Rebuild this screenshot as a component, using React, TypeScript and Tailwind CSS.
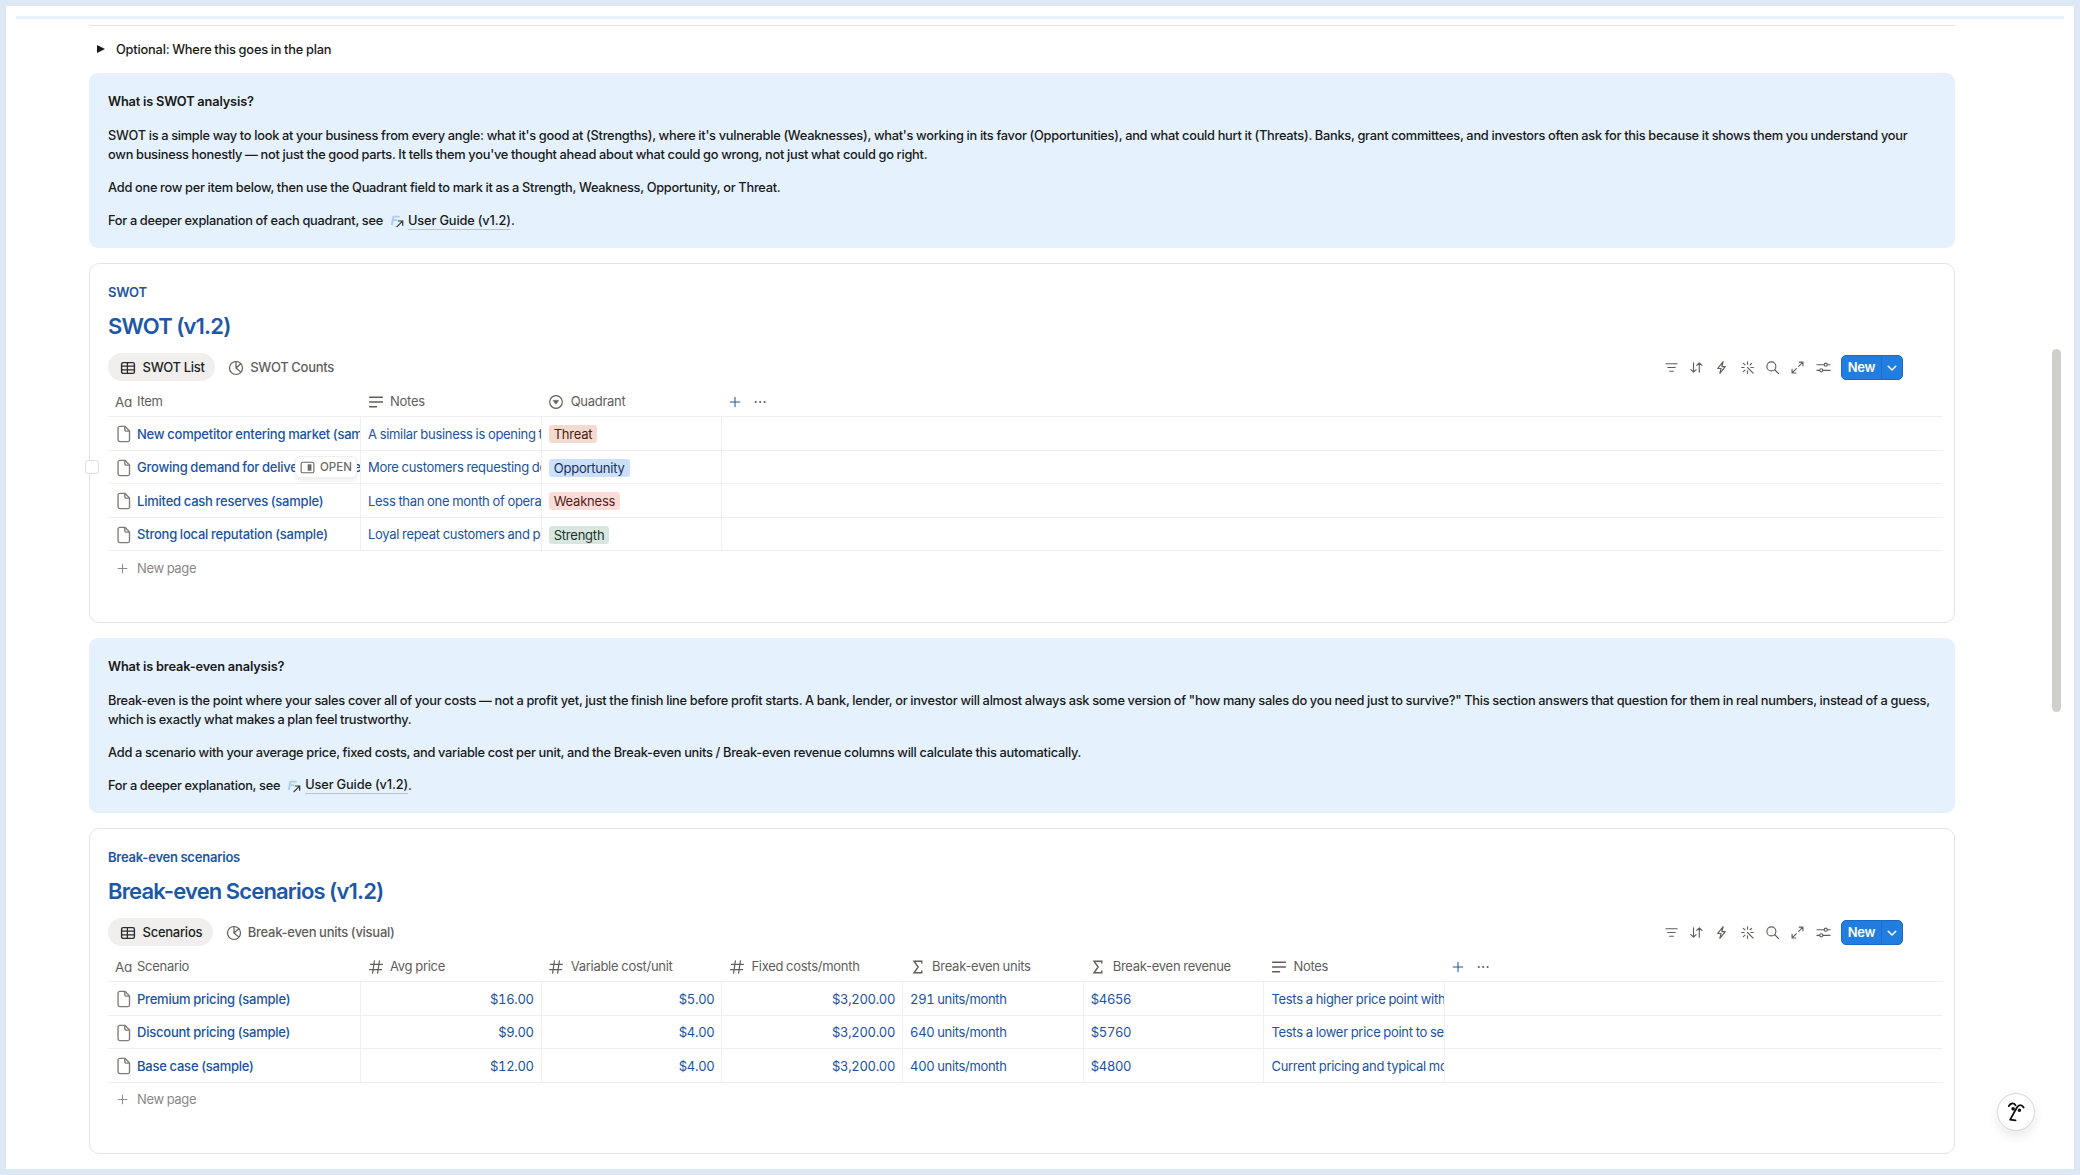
import type { ReactNode } from 'react';

type Column = {
  label: string;
  icon: 'title' | 'text' | 'select' | 'number' | 'formula';
  align?: 'right';
};

type Tag = { tag: string; className: string };
type Row = { name: string; cells: (string | Tag)[]; hovered?: boolean };

const swotColumns: Column[] = [
  { label: 'Item', icon: 'title' },
  { label: 'Notes', icon: 'text' },
  { label: 'Quadrant', icon: 'select' },
];

const swotRows: Row[] = [
  {
    name: 'New competitor entering market (sample)',
    cells: ['A similar business is opening two blocks away', { tag: 'Threat', className: 'bg-[#f5dbcf] text-[#4a2013]' }],
  },
  {
    name: 'Growing demand for delivery (sample)',
    cells: ['More customers requesting delivery options', { tag: 'Opportunity', className: 'bg-[#cce1f9] text-[#16305a]' }],
    hovered: true,
  },
  {
    name: 'Limited cash reserves (sample)',
    cells: ['Less than one month of operating expenses', { tag: 'Weakness', className: 'bg-[#fbdcd8] text-[#521c1a]' }],
  },
  {
    name: 'Strong local reputation (sample)',
    cells: ['Loyal repeat customers and positive reviews', { tag: 'Strength', className: 'bg-[#d9e6e0] text-[#1c3229]' }],
  },
];

const scenarioColumns: Column[] = [
  { label: 'Scenario', icon: 'title' },
  { label: 'Avg price', icon: 'number', align: 'right' },
  { label: 'Variable cost/unit', icon: 'number', align: 'right' },
  { label: 'Fixed costs/month', icon: 'number', align: 'right' },
  { label: 'Break-even units', icon: 'formula' },
  { label: 'Break-even revenue', icon: 'formula' },
  { label: 'Notes', icon: 'text' },
];

const scenarioRows: Row[] = [
  {
    name: 'Premium pricing (sample)',
    cells: ['$16.00', '$5.00', '$3,200.00', '291 units/month', '$4656', 'Tests a higher price point with fewer sales'],
  },
  {
    name: 'Discount pricing (sample)',
    cells: ['$9.00', '$4.00', '$3,200.00', '640 units/month', '$5760', 'Tests a lower price point to see volume'],
  },
  {
    name: 'Base case (sample)',
    cells: ['$12.00', '$4.00', '$3,200.00', '400 units/month', '$4800', 'Current pricing and typical monthly costs'],
  },
];

function Icon({ children, className = 'size-4' }: { children: ReactNode; className?: string }) {
  return (
    <svg
      viewBox="0 0 16 16"
      fill="none"
      stroke="currentColor"
      strokeWidth="1.2"
      strokeLinecap="round"
      strokeLinejoin="round"
      className={`shrink-0 ${className}`}
    >
      {children}
    </svg>
  );
}

const FileIcon = () => (
  <Icon className="h-[18px] w-[18px] text-[#7d7c78]">
    <path d="M4.3 1.2h4.5l4.1 4.1v7.9a1.6 1.6 0 0 1-1.6 1.6h-7a1.6 1.6 0 0 1-1.6-1.6V2.8a1.6 1.6 0 0 1 1.6-1.6z" />
    <path d="M8.7 1.4v2.8a1.2 1.2 0 0 0 1.2 1.2h2.8" />
  </Icon>
);

const PlusIcon = ({ className }: { className: string }) => (
  <Icon className={className}>
    <path d="M8 2.6v10.8M2.6 8h10.8" />
  </Icon>
);

const TableIcon = () => (
  <Icon className="size-4 text-[#2c2c2b]">
    <rect x="1.6" y="2.6" width="12.8" height="10.8" rx="1.6" strokeWidth="1.4" />
    <path d="M1.8 6.2h12.4M1.8 9.8h12.4M7.4 2.8v10.4" strokeWidth="1.3" />
  </Icon>
);

const PieIcon = () => (
  <Icon className="size-4 text-[#5f5e5b]">
    <circle cx="8" cy="8" r="6.5" />
    <path d="M8 1.6V8l4.8-4.3M8 8l4.3 3.6" />
  </Icon>
);

function ColumnIcon({ icon }: { icon: Column['icon'] }) {
  if (icon === 'title') {
    return <span className="w-[17px] text-[13.5px] tracking-[-0.2px] [font-feature-settings:'cv11']">Aa</span>;
  }
  if (icon === 'text') {
    return (
      <Icon>
        <path d="M1.6 3.2h12.8M1.6 8h12.8M1.6 12.8h7" strokeWidth="1.4" />
      </Icon>
    );
  }
  if (icon === 'select') {
    return (
      <Icon>
        <circle cx="8" cy="8" r="6.3" />
        <path d="M5.4 6.4h5.2L8 10z" fill="currentColor" strokeWidth="0.6" />
      </Icon>
    );
  }
  if (icon === 'number') {
    return (
      <Icon>
        <path d="M6.4 1.8 4.6 14.2M11.4 1.8 9.6 14.2M2.4 5.4h12M1.6 10.6h12" />
      </Icon>
    );
  }
  return (
    <Icon>
      <path d="M11.8 4V2.2H4L8.2 8 4 13.8h7.8V12" strokeWidth="1.4" strokeLinejoin="miter" />
    </Icon>
  );
}

function Toolbar() {
  return (
    <div className="flex items-center text-[#5f5e5b]">
      <div className="mr-[10.5px] flex items-center gap-[10.3px]">
        <Icon className="size-[15px]">
          <path d="M2 4h12M4 8h8M6 12h4" />
        </Icon>
        <Icon className="size-[15px]">
          <path d="M4.8 3v10M2 10.2 4.8 13l2.8-2.8M11 13V3M8.2 5.8 11 3l2.8 2.8" />
        </Icon>
        <Icon className="size-[15px]">
          <path d="M9.8 1.8 4 9h3.6L6.2 14.2 12 7H8.4z" />
        </Icon>
        <Icon className="size-[15px]">
          <path d="m8 8 6 6M8 1.8v2.6M8 11.6v2.6M1.8 8h2.6M11.6 8h2.6M3.6 3.6l1.7 1.7M12.4 3.6l-1.7 1.7M5.3 10.7l-1.7 1.7" />
        </Icon>
        <Icon className="size-[15px]">
          <circle cx="6.8" cy="6.8" r="4.8" />
          <path d="m10.4 10.4 4 4" />
        </Icon>
        <Icon className="size-[15px]">
          <path d="M9.2 6.8 13.8 2.2M9.8 2.2h4v4M6.8 9.2l-4.6 4.6M2.2 9.8v4h4" />
        </Icon>
        <Icon className="size-[15px]">
          <path d="M1 5h7.6M12.2 5H15M1 11h2.8M7.4 11H15" />
          <circle cx="10.4" cy="5" r="1.7" />
          <circle cx="5.6" cy="11" r="1.7" />
        </Icon>
      </div>
      <div className="flex h-[25px] w-[62px] overflow-hidden rounded-[5px] border border-[#1a6ac6] bg-[#217de0] text-white">
        <button className="flex w-[40px] items-center justify-center border-r border-[#1b6ecb] pt-px text-[13px] font-semibold">New</button>
        <button className="flex flex-1 items-center justify-center pt-[2px]">
          <Icon className="size-3">
            <path d="m3 5.6 5 5 5-5" strokeWidth="2" />
          </Icon>
        </button>
      </div>
    </div>
  );
}

function Callout({ title, children, seeText }: { title: string; children: ReactNode; seeText: string }) {
  return (
    <section className="flex h-[175.6px] flex-col gap-[14.3px] rounded-[9px] bg-[#e5f2fe] pt-[19.5px] pr-[18px] pl-[19px] text-[12.8px] leading-[19.1px] font-[450] tracking-[-0.25px] [word-spacing:-0.25px] whitespace-nowrap text-[#191918]">
      <h3 className="font-semibold tracking-[-0.14px]">{title}</h3>
      {children}
      <p className="flex items-center">
        {seeText}
        <svg viewBox="0 0 16 16" className="mr-[4px] ml-[7px] size-[14px]" fill="none">
          <path d="M2 12.5 4 3h7M3.2 7h5" stroke="#a9cdf3" strokeWidth="2.2" />
          <path d="M7.5 15 14 8.5M9 8h5.5v5.5" stroke="#2f2f2e" strokeWidth="1.4" />
        </svg>
        <a className="border-b border-[#b9c3ce] leading-[16px] font-medium tracking-[-0.12px]">User Guide (v1.2)</a>.
      </p>
    </section>
  );
}

function OpenButton() {
  return (
    <button className="absolute top-[5px] right-[3px] flex h-[22px] w-[62px] items-center gap-[5px] rounded-[5px] border border-[#efefee] bg-white pt-px pl-[4px] text-[11.5px] font-medium tracking-normal text-[#6b6a67] shadow-[0_2px_4px_rgba(0,0,0,0.08)]">
      <Icon className="size-[15px]">
        <rect x="1.2" y="2.4" width="13.6" height="11.2" rx="1.6" />
        <rect x="8.2" y="4.6" width="4" height="6.8" fill="currentColor" stroke="none" />
      </Icon>
      OPEN
    </button>
  );
}

const isAmount = (value: string) => /^[$\d]/.test(value);

type DatabaseProps = {
  label: string;
  title: string;
  tabs: [string, string];
  columns: Column[];
  rows: Row[];
  className: string;
};

function Database({ label, title, tabs, columns, rows, className }: DatabaseProps) {
  return (
    <section className={`flex flex-col rounded-[10px] border border-[#e4e4e2] pr-[12px] pl-[18px] ${className}`}>
      <div className="mt-[19px] text-[13px] leading-[19px] font-semibold text-[#1c55a3]">{label}</div>
      <h2 className="mt-[9px] text-[22px] leading-[30px] font-semibold tracking-[-0.83px] text-[#1c57a8]">{title}</h2>

      <div className="mt-[12px] flex h-[28.5px] items-center justify-between pr-[39px]">
        <div className="flex h-full items-center text-[13px] font-medium tracking-[-0.26px]">
          <div className="flex h-full items-center gap-[6.5px] rounded-full bg-[#f0efed] pt-px pr-[10.5px] pl-[12px] text-[#1f1f1e]">
            <TableIcon />
            {tabs[0]}
          </div>
          <div className="ml-[13px] flex items-center gap-[6px] pt-px text-[#5f5e5b]">
            <PieIcon />
            {tabs[1]}
          </div>
        </div>
        <Toolbar />
      </div>

      <div className="mt-[4.5px] flex h-[31.5px] items-center border-b border-[#efefee] pt-px text-[13px] tracking-[-0.28px] text-[#5f5e5b]">
        {columns.map((col, i) => (
          <div
            key={col.label}
            className={i === 0 ? 'flex w-[253px] items-center gap-[5px] pl-[7px]' : 'flex w-[180.7px] items-center gap-[6.5px] pl-[6.5px]'}
          >
            <ColumnIcon icon={col.icon} />
            {col.label}
          </div>
        ))}
        <PlusIcon className="ml-[6px] size-[14px] text-[#1c57a8]" />
        <svg viewBox="0 0 16 16" className="ml-[10px] size-4" fill="#5f5e5b">
          <circle cx="3.8" cy="8" r="1.1" />
          <circle cx="8.2" cy="8" r="1.1" />
          <circle cx="12.6" cy="8" r="1.1" />
        </svg>
      </div>

      {rows.map(row => (
        <div key={row.name} className="relative flex h-[33.5px] border-b border-[#efefee] text-[13px] text-[#1b53a0]">
          {row.hovered && <span className="absolute top-[9px] -left-[23px] size-[14px] rounded-[3px] border border-[#dededc] bg-white" />}
          <div className="relative flex w-[253px] items-center gap-[4px] overflow-hidden border-r border-[#efefee] pt-[1.5px] pl-[7px] font-medium whitespace-nowrap">
            <FileIcon />
            {row.name}
            {row.hovered && <OpenButton />}
          </div>
          {row.cells.map((cell, i) => (
            <div
              key={i}
              className={`flex w-[180.7px] items-center overflow-hidden border-r border-[#efefee] pl-[7px] whitespace-nowrap ${
                columns[i + 1].align === 'right' ? 'justify-end pr-[7px]' : ''
              } ${typeof cell !== 'string' ? 'pt-px' : isAmount(cell) ? 'pt-[1.5px] tracking-[-0.32px] tabular-nums' : 'pt-[1.5px] tracking-[-0.3px]'}`}
            >
              {typeof cell === 'string' ? (
                cell
              ) : (
                <span className={`rounded-[3px] px-[5px] leading-[18px] ${cell.className}`}>{cell.tag}</span>
              )}
            </div>
          ))}
        </div>
      ))}

      <div className="flex h-[34px] items-center gap-[8px] pl-[8px] text-[13px] tracking-[-0.35px] text-[#8a8985]">
        <PlusIcon className="size-[13px]" />
        New page
      </div>
    </section>
  );
}

export default function App() {
  return (
    <div className="relative h-[1175px] w-[2080px] overflow-hidden border-6 border-[#dce8f3] bg-white font-[Inter,sans-serif] tracking-[-0.22px] [word-spacing:-0.4px]">
      <div className="mx-[10px] mt-[10px] h-[3px] bg-[#e5f2fe]" />
      <main className="ml-[83px] w-[1866px]">
        <div className="mt-[6px] h-px bg-[#e3e3e1]" />
        <div className="flex h-[46.7px] items-center gap-[11px] pl-[8px] text-[12.8px] font-[450] tracking-[-0.19px] text-[#191918]">
          <svg viewBox="0 0 8 8" className="size-[8px]" fill="currentColor">
            <path d="M0 0v8l8-4z" />
          </svg>
          Optional: Where this goes in the plan
        </div>

        <Callout title="What is SWOT analysis?" seeText="For a deeper explanation of each quadrant, see">
          <p>
            SWOT is a simple way to look at your business from every angle: what it's good at (Strengths), where it's vulnerable
            (Weaknesses), what's working in its favor (Opportunities), and what could hurt it (Threats). Banks, grant committees, and
            investors often ask for this because it shows them you understand your
            <br />
            own business honestly — not just the good parts. It tells them you've thought ahead about what could go wrong, not just
            what could go right.
          </p>
          <p>Add one row per item below, then use the Quadrant field to mark it as a Strength, Weakness, Opportunity, or Threat.</p>
        </Callout>

        <Database
          label="SWOT"
          title="SWOT (v1.2)"
          tabs={['SWOT List', 'SWOT Counts']}
          columns={swotColumns}
          rows={swotRows}
          className="mt-[14.7px] h-[359.7px]"
        />

        <div className="h-[15px]" />
        <Callout title="What is break-even analysis?" seeText="For a deeper explanation, see">
          <p>
            Break-even is the point where your sales cover all of your costs — not a profit yet, just the finish line before profit
            starts. A bank, lender, or investor will almost always ask some version of "how many sales do you need just to survive?"
            This section answers that question for them in real numbers, instead of a guess,
            <br />
            which is exactly what makes a plan feel trustworthy.
          </p>
          <p>
            Add a scenario with your average price, fixed costs, and variable cost per unit, and the Break-even units / Break-even
            revenue columns will calculate this automatically.
          </p>
        </Callout>

        <Database
          label="Break-even scenarios"
          title="Break-even Scenarios (v1.2)"
          tabs={['Scenarios', 'Break-even units (visual)']}
          columns={scenarioColumns}
          rows={scenarioRows}
          className="mt-[14.7px] h-[326px]"
        />
      </main>

      <div className="absolute top-[343px] right-[13px] h-[363px] w-[9px] rounded-full bg-[#cfcfcb]" />

      <button className="absolute right-[39px] bottom-[38px] flex size-[38px] items-center justify-center rounded-full border border-[#d6d6d5] bg-white shadow-[0_6px_12px_rgba(0,0,0,0.08)]">
        <svg viewBox="0 0 20 24" className="h-[22px] w-[18px]" fill="none" stroke="#0f0f0f" strokeWidth="2" strokeLinecap="round" strokeLinejoin="round">
          <path d="M2 5.5C3.5 2 7.5 1.5 9.5 4.5M18.5 7C16.5 3.5 13 3.5 11 7L3.5 20.5l6 .8" />
          <circle cx="6.8" cy="8.5" r="1" fill="#0f0f0f" />
          <circle cx="13.8" cy="10" r="1" fill="#0f0f0f" />
        </svg>
      </button>
    </div>
  );
}
